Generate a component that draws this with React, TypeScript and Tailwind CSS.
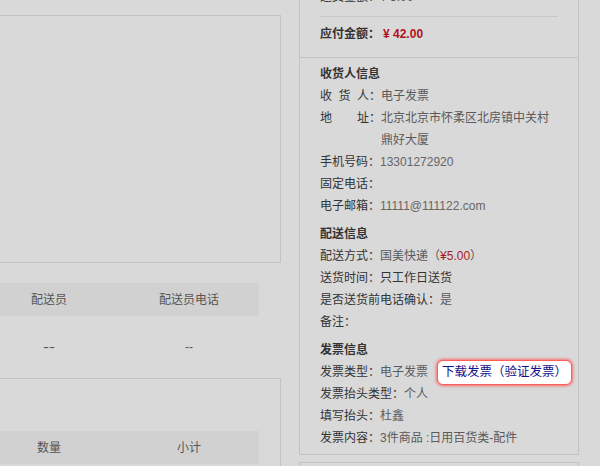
import React from 'react'

const FONT = '"Liberation Sans", "Noto Sans CJK SC", sans-serif'

type Row = { label: React.ReactNode; value?: React.ReactNode }

function Spread({ chars }: { chars: string[] }) {
  return (
    <span className="inline-flex w-[49px] justify-between">
      {chars.map((c, i) => (
        <span key={i}>{c}</span>
      ))}
    </span>
  )
}

function InfoRow({ label, value }: Row) {
  return (
    <div className="flex items-start leading-[22px]">
      <span className="shrink-0 whitespace-nowrap text-[#333]">{label}</span>
      {value !== undefined && <span className="text-[#5a5a5a]">{value}</span>}
    </div>
  )
}

function Section({ title, rows }: { title: string; rows: Row[] }) {
  return (
    <div className="flex flex-col">
      <div className="font-bold text-[#333] leading-[22px]">{title}</div>
      {rows.map((r, i) => (
        <InfoRow key={i} {...r} />
      ))}
    </div>
  )
}

function TableHead({ cols }: { cols: string[] }) {
  return (
    <div className="ml-[-21px] grid w-[280px] grid-cols-2 h-[33px] items-center bg-[#d1d1d1] text-[#555]">
      {cols.map((c) => (
        <div key={c} className="text-center">{c}</div>
      ))}
    </div>
  )
}

export default function App() {
  return (
    <div
      className="relative flex h-[466px] w-[600px] overflow-hidden bg-[#d9d9d9] text-[12px]"
      style={{ fontFamily: FONT }}
    >
      {/* left column */}
      <div className="flex w-[299px] shrink-0 flex-col">
        <div className="mt-[15px] h-[248px] w-[281px] border-t border-r border-b border-[#c3c3c3]" />
        <div className="mt-[20px]">
          <TableHead cols={['配送员', '配送员电话']} />
          <div className="ml-[-21px] grid w-[280px] grid-cols-2 h-[62px] items-center text-[#555]">
            <div className="text-center">
              <span className="inline-block scale-x-150">--</span>
            </div>
            <div className="text-center">--</div>
          </div>
        </div>
        <div className="flex-1 w-[281px] border-t border-r border-[#c3c3c3] pt-[52px]">
          <TableHead cols={['数量', '小计']} />
        </div>
      </div>

      {/* right column */}
      <div className="flex w-[280px] shrink-0 flex-col">
        <div className="h-[455px] border-l border-r border-b border-[#c3c3c3]">
          <div className="mt-[-14px] border-b border-[#c3c3c3] px-[20px] pb-[12px]">
            <div className="border-b border-[#c8c8c8] pb-[8px] leading-[22px] text-[#333]">
              运费金额：<span className="text-[#555]">¥ 5.00</span>
            </div>
            <div className="pt-[6px] leading-[22px] font-bold text-[#333]">
              应付金额：<span className="ml-[3px] text-[#b2121c]">¥ 42.00</span>
            </div>
          </div>
          <div className="flex flex-col gap-[6px] px-[20px] pt-[5px]">
            <Section
              title="收货人信息"
              rows={[
                { label: <><Spread chars={['收', '货', '人']} />：</>, value: '电子发票' },
                {
                  label: <><Spread chars={['地', '址']} />：</>,
                  value: <span className="block w-[170px]">北京北京市怀柔区北房镇中关村鼎好大厦</span>,
                },
                { label: '手机号码：', value: <span className="text-[#666]">13301272920</span> },
                { label: '固定电话：' },
                { label: '电子邮箱：', value: <span className="text-[#666]">11111@111122.com</span> },
              ]}
            />
            <Section
              title="配送信息"
              rows={[
                {
                  label: '配送方式：',
                  value: (
                    <>
                      国美快递（<span className="text-[#a61b1b]">¥5.00</span>）
                    </>
                  ),
                },
                { label: '送货时间：', value: <span className="text-[#333]">只工作日送货</span> },
                { label: '是否送货前电话确认：', value: '是' },
                { label: '备注：' },
              ]}
            />
            <div className="flex flex-col">
              <div className="font-bold text-[#333] leading-[22px]">发票信息</div>
              <div className="flex items-center whitespace-nowrap leading-[22px]">
                <span className="shrink-0 text-[#333]">发票类型：</span>
                <span className="shrink-0 text-[#5a5a5a]">电子发票</span>
                <span className="my-[-2px] ml-[9px] flex h-[25px] shrink-0 items-center rounded-[6px] border border-[#ff5c5c] bg-white px-[4px] text-[12.5px] text-[#12128c] shadow-[0_0_3px_1px_rgba(255,80,80,0.8)]">
                  下载发票（验证发票）
                </span>
              </div>
              <InfoRow label="发票抬头类型：" value="个人" />
              <InfoRow label="填写抬头：" value="杜鑫" />
              <InfoRow label="发票内容：" value="3件商品 :日用百货类-配件" />
            </div>
          </div>
        </div>
        <div className="mt-[7px] flex-1 border-t border-l border-r border-[#c3c3c3]" />
      </div>
    </div>
  )
}
